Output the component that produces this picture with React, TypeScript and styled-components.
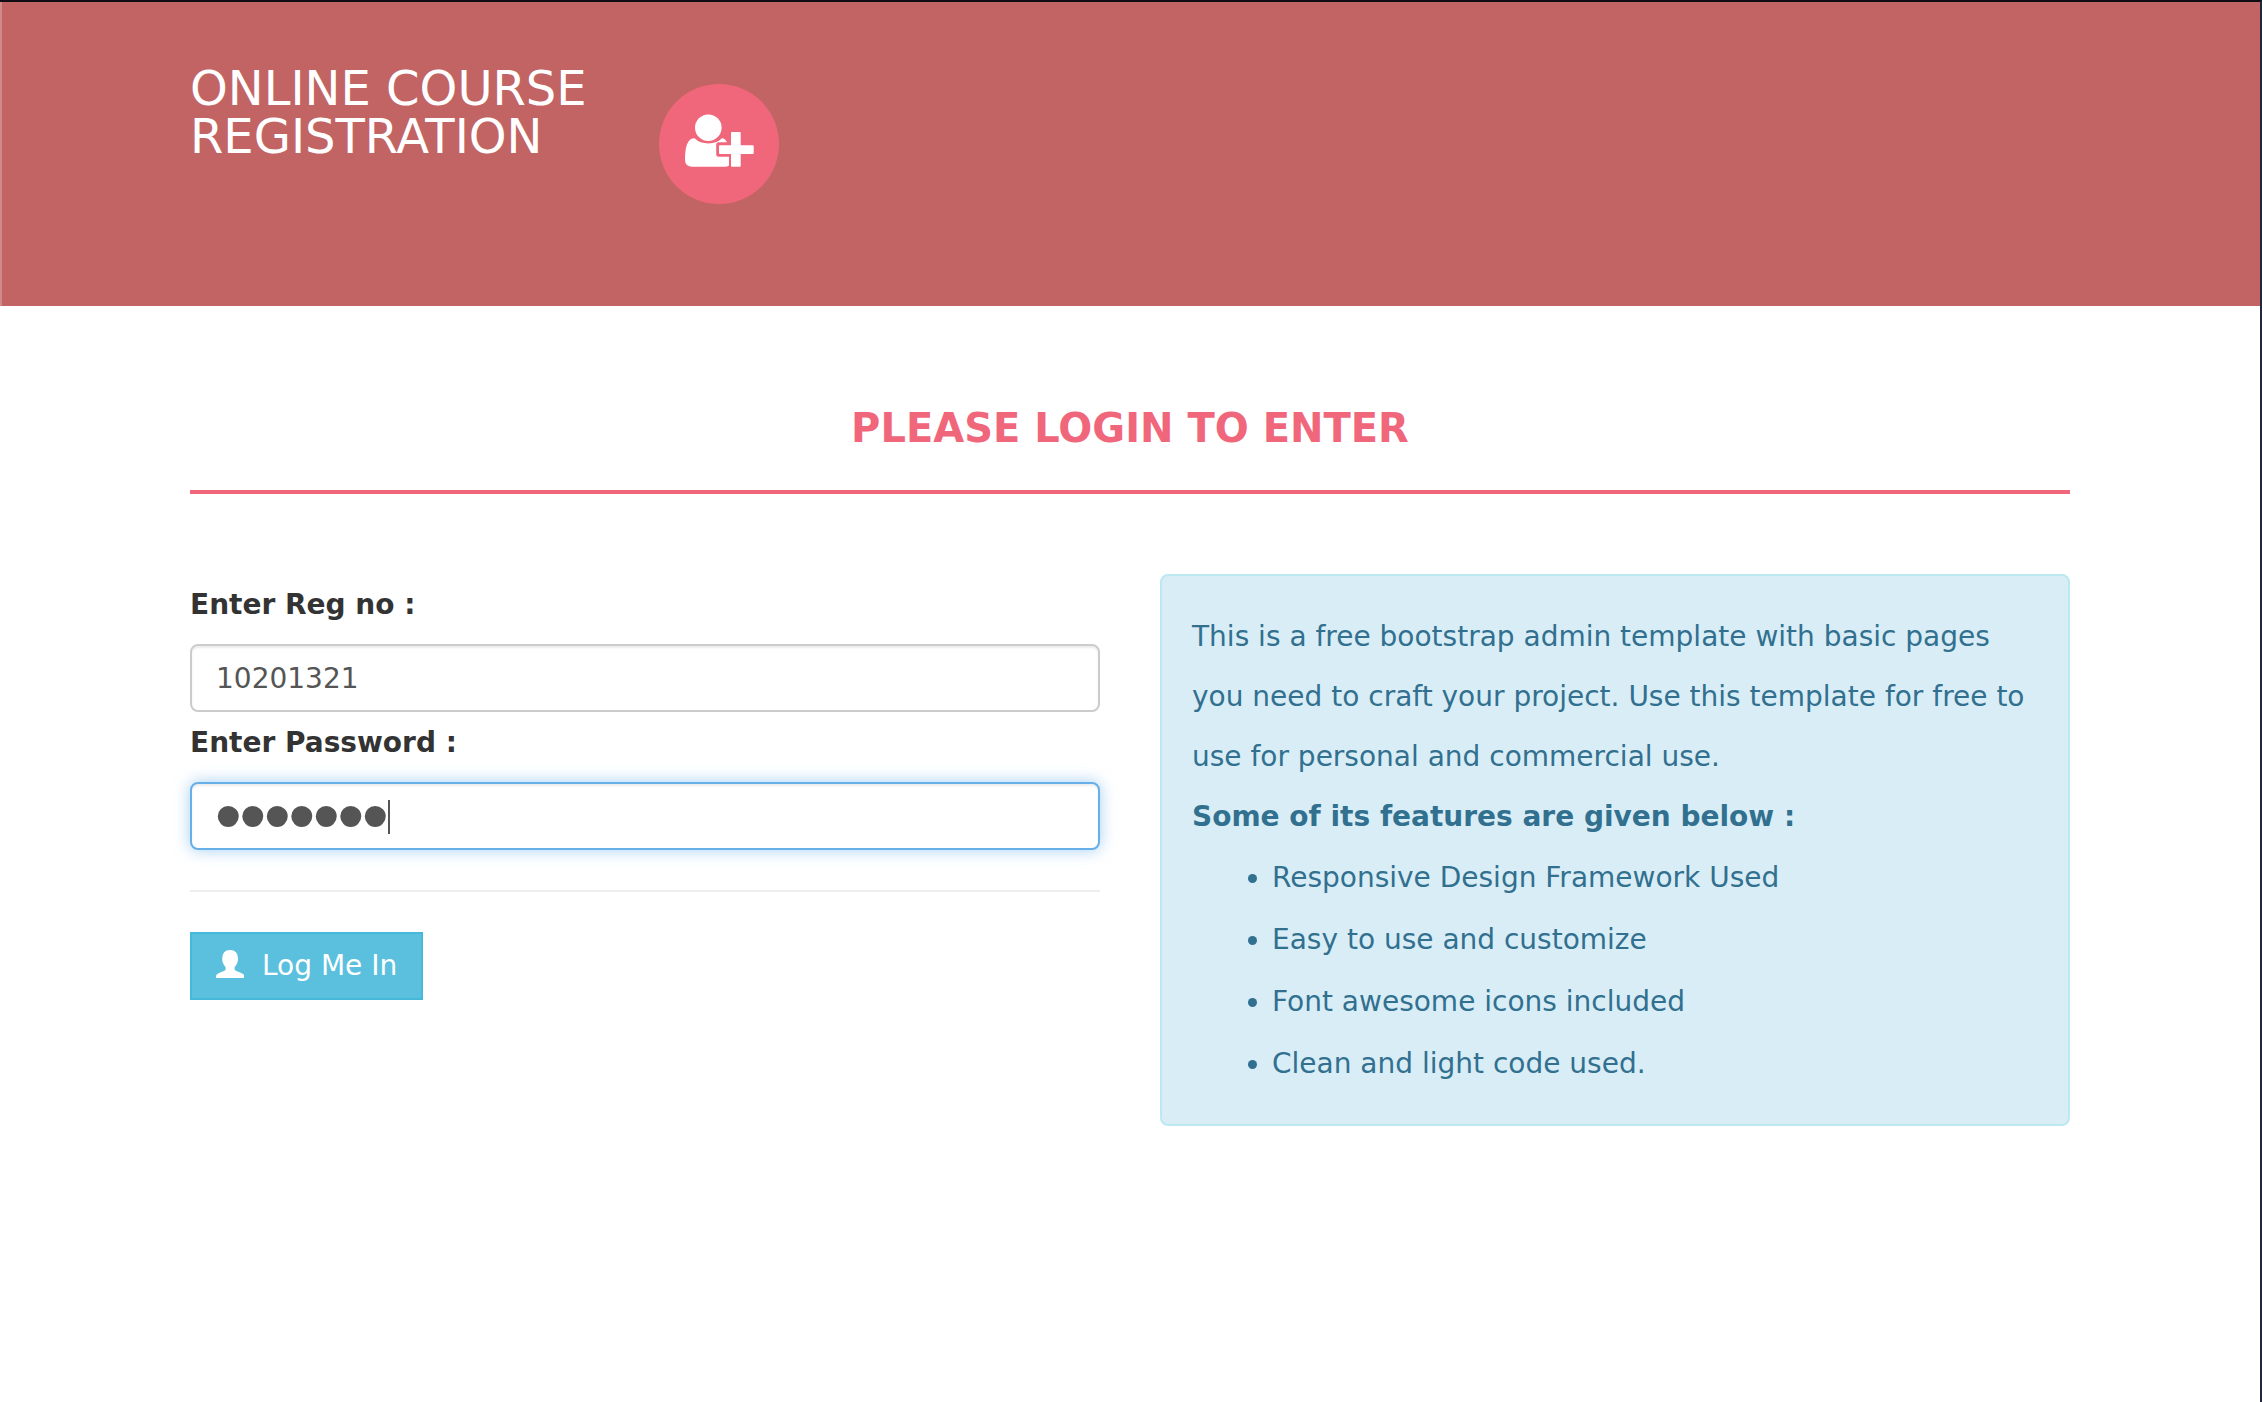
import React from "react";
import styled, { createGlobalStyle } from "styled-components";

const GlobalStyle = createGlobalStyle`
  *, *::before, *::after { box-sizing: border-box; }
  html, body { height: 100%; }
  body {
    margin: 0;
    background: #fff;
    color: #333;
    font-family: "DejaVu Sans", sans-serif;
    font-size: 28px;
    line-height: 60px;
  }
  #root { height: 100%; }
`;

const Page = styled.div`
  min-height: 100%;
  border-top: 2px solid #100c14;
  border-right: 2px solid #23273a;
`;

const Container = styled.div`
  max-width: 1940px;
  margin: 0 auto;
  padding: 0 30px;
`;

const Header = styled.header`
  min-height: 304px;
  background: #c26464;
  box-shadow: inset 2px 0 0 #d08a8a;
`;

const Brand = styled(Container)`
  display: flex;
  align-items: flex-start;
  gap: 72px;
`;

const BrandLink = styled.a`
  padding-top: 62px;
  color: #fff;
  font-size: 48px;
  line-height: 48px;
  text-decoration: none;
  white-space: pre-line;
`;

const BrandBadge = styled.span`
  display: block;
  width: 120px;
  height: 120px;
  margin-top: 82px;
  border-radius: 50%;
  background: #f0677c;
`;

const Main = styled.main`
  padding-top: 92px;
`;

const PageTitle = styled.h1`
  margin: 0 0 80px;
  padding-bottom: 32px;
  border-bottom: 4px solid #f0677c;
  color: #f0677c;
  font-size: 40px;
  line-height: 60px;
  text-align: center;
`;

const Columns = styled.div`
  display: grid;
  grid-template-columns: 1fr 1fr;
  gap: 60px;
  align-items: start;
`;

const FieldLabel = styled.label`
  display: block;
  padding: 1px 0 9px;
  font-weight: 700;
`;

const TextInput = styled.input`
  display: block;
  width: 100%;
  height: 68px;
  padding: 12px 24px;
  border: 2px solid #ccc;
  border-radius: 8px;
  outline: none;
  background: #fff;
  color: #555;
  font: inherit;
  line-height: 40px;
  box-shadow: inset 0 2px 2px rgba(0, 0, 0, 0.075);
`;

const PasswordBox = styled.div`
  position: relative;
`;

/* Large bullets need a face whose mask glyph is wide for its advance. */
const PasswordInput = styled(TextInput)`
  border-color: #66afe9;
  box-shadow: inset 0 2px 2px rgba(0, 0, 0, 0.075), 0 0 16px rgba(102, 175, 233, 0.6);
  font-family: "Liberation Sans", sans-serif;
  font-size: 70px;
  -webkit-text-stroke: 2px #555;
  caret-color: transparent;
`;

const Caret = styled.span`
  position: absolute;
  top: 18px;
  left: 198px;
  width: 2px;
  height: 34px;
  background: #555;
`;

const Divider = styled.hr`
  margin: 40px 0;
  border: 0;
  border-top: 2px solid #eee;
`;

const LoginButton = styled.button`
  display: flex;
  align-items: center;
  gap: 18px;
  padding: 12px 24px;
  border: 2px solid #46b8da;
  background: #5bc0de;
  color: #fff;
  font: inherit;
  line-height: 40px;
  cursor: pointer;

  svg { margin-bottom: 4px; }
`;

const Notice = styled.aside`
  padding: 31px 30px 29px;
  border: 2px solid #bce8f1;
  border-radius: 8px;
  background: #d9edf7;
  color: #31708f;
`;

const NoticeText = styled.p`
  margin: 0;
`;

const FeatureList = styled.ul`
  margin: 0;
  padding-left: 80px;
  line-height: 62px;
`;

const UserPlusIcon = () => (
  <svg viewBox="0 0 120 120" width="120" height="120" fill="#fff" aria-hidden="true" display="block">
    <circle cx="49.3" cy="43.7" r="13.3" />
    <path d="M35.5 54.2 Q41 59.4 49.3 59.4 Q57.5 59.4 63 54.2 Q66 54.2 68 58.2 H59.5 Q57.2 58.2 57.2 60.5 V70.5 Q57.2 72.8 59.5 72.8 H70 V81.4 Q68.5 82.8 66 82.8 H33.5 Q26 82.8 26 75.5 Q26 54.2 35.5 54.2Z" />
    <path d="M73 48 H80.7 Q81.7 48 81.7 49 V61.3 H93.7 Q94.7 61.3 94.7 62.3 V69 Q94.7 70 93.7 70 H81.7 V81.7 Q81.7 82.7 80.7 82.7 H73 Q72 82.7 72 81.7 V70 H61 Q60 70 60 69 V62.3 Q60 61.3 61 61.3 H72 V49 Q72 48 73 48Z" />
  </svg>
);

const UserIcon = () => (
  <svg viewBox="0 0 28 28" width="28" height="28" fill="#fff" aria-hidden="true">
    <path d="M14 0 Q22 0 22 9 Q22 13.5 18.6 17 V19.4 Q19 20.6 21 21.2 Q28 23.5 28.4 26 V28 H0 V26 Q0.4 23.5 7.4 21.2 Q9.4 20.6 9.6 19.4 V17 Q6.2 13.5 6.2 9 Q6.2 0 14 0Z" />
  </svg>
);

const features = [
  "Responsive Design Framework Used",
  "Easy to use and customize",
  "Font awesome icons included",
  "Clean and light code used.",
];

export default function App() {
  return (
    <>
      <GlobalStyle />
      <Page>
        <Header>
          <Brand>
            <BrandLink href="#">{"ONLINE COURSE\nREGISTRATION"}</BrandLink>
            <BrandBadge>
              <UserPlusIcon />
            </BrandBadge>
          </Brand>
        </Header>
        <Main>
          <Container>
            <PageTitle>PLEASE LOGIN TO ENTER</PageTitle>
            <Columns>
              <form onSubmit={(e) => e.preventDefault()}>
                <FieldLabel htmlFor="regno">Enter Reg no : </FieldLabel>
                <TextInput id="regno" type="text" defaultValue="10201321" />
                <FieldLabel htmlFor="password">Enter Password : </FieldLabel>
                <PasswordBox>
                  <PasswordInput id="password" type="password" defaultValue="1234567" autoFocus />
                  <Caret />
                </PasswordBox>
                <Divider />
                <LoginButton type="submit">
                  <UserIcon />
                  Log Me In
                </LoginButton>
              </form>
              <Notice>
                <NoticeText>
                  This is a free bootstrap admin template with basic pages you need to craft your
                  project. Use this template for free to use for personal and commercial use.
                  <br />
                  <strong>Some of its features are given below :</strong>
                </NoticeText>
                <FeatureList>
                  {features.map((f) => (
                    <li key={f}>{f}</li>
                  ))}
                </FeatureList>
              </Notice>
            </Columns>
          </Container>
        </Main>
      </Page>
    </>
  );
}
